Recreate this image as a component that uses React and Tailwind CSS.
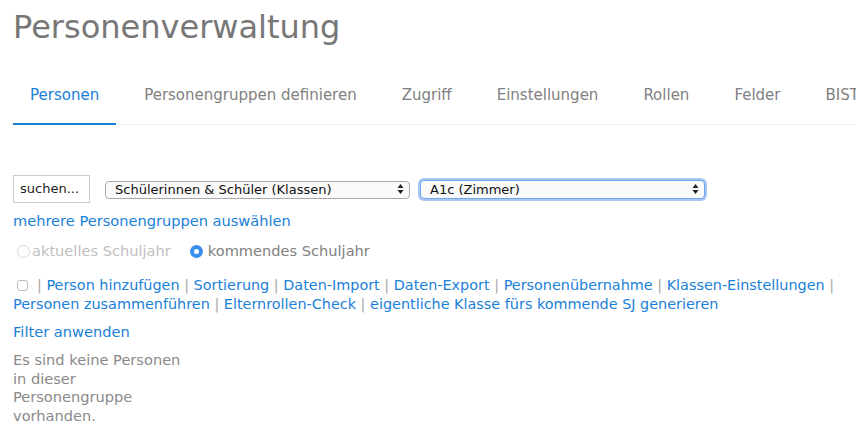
import { useState } from "react";

const TABS = ["Personen", "Personengruppen definieren", "Zugriff", "Einstellungen", "Rollen", "Felder", "BIST"];

const ACTIONS = [
    "Person hinzufügen",
    "Sortierung",
    "Daten-Import",
    "Daten-Export",
    "Personenübernahme",
    "Klassen-Einstellungen",
    "Personen zusammenführen",
    "Elternrollen-Check",
    "eigentliche Klasse fürs kommende SJ generieren",
];

const Arrows = () => (
    <svg width="7" height="11" viewBox="0 0 7 11" className="pointer-events-none absolute right-[6px] top-1/2 -translate-y-1/2">
        <path d="M3.5 0.5 L6.5 4.5 L0.5 4.5 Z" fill="#222" />
        <path d="M3.5 10.5 L6.5 6.5 L0.5 6.5 Z" fill="#222" />
    </svg>
);

const App = () => {
    const [year, setYear] = useState("next");

    return (
        <div className="min-h-screen overflow-hidden bg-white pl-[13px] font-['DejaVu_Sans',sans-serif] text-[#777]">
            <h1 className="pt-[7px] text-[32px] leading-[40px] text-[#777]">Personenverwaltung</h1>

            <nav className="mt-[38px] flex gap-[11px] whitespace-nowrap border-b border-[#eeeeee]">
                {TABS.map((t, i) => (
                    <div
                        key={t}
                        className={
                            i === 0
                                ? "-mb-px border-b-[2px] border-[#1a80d8] px-[17px] pb-[18px] text-[15px] leading-[20px] text-[#1a80d8]"
                                : "px-[17px] pb-[18px] text-[15px] leading-[20px] text-[#808080]"
                        }
                    >
                        {t}
                    </div>
                ))}
            </nav>

            <div className="mt-[50px] flex items-center">
                <div className="flex h-[28px] w-[77px] items-center border border-[#cccccc] px-[6px] text-[13px] text-[#222]">
                    suchen...
                </div>
                <div className="relative ml-[15px]">
                    <select
                        defaultValue="sus"
                        className="h-[18px] w-[305px] appearance-none rounded-[4px] border border-[#a9a9a9] bg-[#fafafa] pl-[9px] text-[13px] leading-[16px] text-[#111] outline-none"
                    >
                        <option value="sus">Schülerinnen & Schüler (Klassen)</option>
                    </select>
                    <Arrows />
                </div>
                <div className="relative ml-[10px]">
                    <select
                        defaultValue="a1c"
                        className="h-[19px] w-[285px] appearance-none rounded-[4px] border border-[#6fa5ec] bg-[#fafafa] pl-[9px] text-[13px] leading-[17px] text-[#111] shadow-[0_0_0_2px_#a8c8f4] outline-none"
                    >
                        <option value="a1c">A1c (Zimmer)</option>
                    </select>
                    <Arrows />
                </div>
            </div>

            <a href="#" className="mt-[9px] block text-[14.6px] leading-[18px] text-[#1a80d8]">
                mehrere Personengruppen auswählen
            </a>

            <div className="mt-[12px] flex items-center text-[14.6px] leading-[18px]">
                <label className="ml-[4px] flex items-center gap-[2px] text-[#c0c0c0]">
                    <span className="h-[13px] w-[13px] shrink-0 rounded-full border border-[#d8d8d8] bg-white" />
                    aktuelles Schuljahr
                </label>
                <label className="ml-[19px] flex cursor-pointer items-center gap-[5px] text-[#808080]" onClick={() => setYear("next")}>
                    <span className="flex h-[13px] w-[13px] shrink-0 items-center justify-center rounded-full bg-[#3b8ff0]">
                        {year === "next" && <span className="h-[5px] w-[5px] rounded-full bg-white" />}
                    </span>
                    kommendes Schuljahr
                </label>
            </div>

            <div className="mt-[16px] text-[14.4px] leading-[18.5px] text-[#1a80d8]">
                <span className="ml-[4px] mr-[9px] inline-block h-[11px] w-[11px] rounded-[3px] border border-[#bbbbbb] align-[-1px]" />
                {ACTIONS.map((a, i) => (
                    <span key={a}>
                        {i !== 6 && <span className="text-[#aaa]">|&nbsp;</span>}
                        <span className="whitespace-nowrap">
                            <a href="#" className="text-[#1a80d8]">{a}</a>
                            {i === 5 && <span className="text-[#aaa]">&nbsp;|</span>}
                        </span>{" "}
                    </span>
                ))}
            </div>

            <a href="#" className="mt-[10px] block text-[14.6px] leading-[18px] text-[#1a80d8]">
                Filter anwenden
            </a>

            <p className="mt-[10px] w-[180px] text-[14.6px] leading-[18.5px] text-[#8a8a8a]">
                Es sind keine Personen in dieser Personengruppe vorhanden.
            </p>
        </div>
    );
};

export default App;
